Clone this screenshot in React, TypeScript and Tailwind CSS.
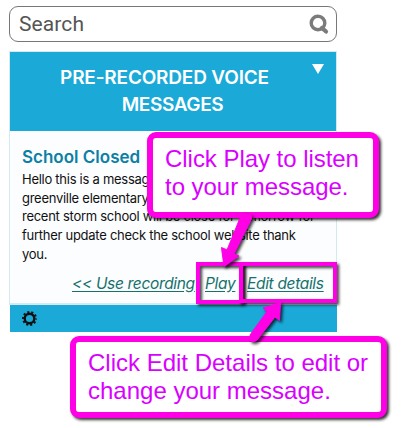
import React from "react";

const Arrows = () => (
  <svg className="absolute left-0 top-0 z-20 drop-shadow-[2px_2px_1.5px_rgba(0,0,0,0.75)]" width="406" height="428" viewBox="0 0 406 428" fill="#ff00e6" stroke="#ff00e6" strokeLinejoin="round">
    <path strokeWidth="1" d="M242 213 L251 215 L251.500 219 L234 254 L239 256 L224 266.500 L221.500 247.500 L227 250 Z" />
    <path strokeWidth="1" d="M280.500 302.500 L279.500 320.500 L275 317 L258 339 Q254 343.500 250 340.500 Q248 338 251 333.500 L267 311.500 L263 308 Z" />
  </svg>
);

export default function App() {
  return (
    <div className="relative h-[428px] w-[406px] overflow-hidden bg-white pl-[9px] pt-[6px] font-['Inter',sans-serif]">
      <div className="flex h-9 w-[328px] items-center justify-between rounded-[9px] border border-[#777] pl-[9px] pr-[7px] text-[#555]">
        <span className="font-['Roboto',sans-serif] text-[21px] leading-8 tracking-[0.1px]">Search</span>
        <svg width="20" height="21" viewBox="0 0 20 21" fill="none" stroke="#7b7b7b">
          <circle cx="9" cy="9" r="6.8" strokeWidth="3.4" />
          <path d="M13 14 L17 17.500" strokeWidth="4.200" strokeLinecap="round" />
        </svg>
      </div>

      <div className="mt-[9px] w-[328px]">
        <div className="border border-b-2 border-[#d3eaf1] bg-[#fbfdff]">
          <div className="relative h-[79px] bg-[#1ba9d8] pt-[12px] text-center text-[19px] font-semibold leading-[27px] text-white">
            <div className="whitespace-nowrap pr-[17px] tracking-[-0.18px]">PRE-RECORDED VOICE</div>
            <div className="pr-px tracking-[-0.4px]">MESSAGES</div>
            <svg className="absolute right-3 top-3" width="12" height="10" viewBox="0 0 12 10" fill="white"><path d="M0 0H12L6 10Z" /></svg>
          </div>
          <div className="h-[172px] pl-3 pt-[15px]">
            <h2 className="text-[17px] font-semibold leading-[22px] text-[#0c80a4]">School Closed</h2>
            <div className="whitespace-nowrap pt-[2px] text-[13px] leading-[18.7px] tracking-[-0.27px] text-[#111]">
              <div>Hello this is a message</div>
              <div>greenville elementary</div>
              <div>recent storm school will be close for tomorrow for</div>
              <div>further update check the school website thank</div>
              <div>you.</div>
            </div>
            <div className="flex whitespace-nowrap pl-[50px] pt-[10px] text-[15.5px] italic leading-[20px] tracking-[-0.33px] text-[#16706b] underline underline-offset-2">
              <span className="w-[133px]">&lt;&lt; Use recording</span>
              <span className="w-[42px]">Play</span>
              <span>Edit details</span>
            </div>
          </div>
        </div>
        <div className="ml-px flex h-[27px] items-center bg-[#1ba9d8] pl-3">
          <svg width="15" height="15" viewBox="0 0 15 15" fill="none" stroke="#111">
            <circle cx="7.500" cy="7.500" r="4.800" strokeWidth="2.4" />
            <circle cx="7.500" cy="7.500" r="6.500" strokeWidth="2" strokeDasharray="2.042 2.042" strokeDashoffset="1" />
          </svg>
        </div>
      </div>

      <div className="absolute left-[196px] top-[262px] h-[42px] w-[48px] border-4 border-[#ff00e6] drop-shadow-[2px_2px_1.5px_rgba(0,0,0,0.75)]" />
      <div className="absolute left-[239px] top-[262px] h-[41px] w-[98px] border-4 border-[#ff00e6] drop-shadow-[2px_2px_1.5px_rgba(0,0,0,0.75)]" />

      <div className="absolute left-[147px] top-[132px] z-10 h-[86px] w-[232px] whitespace-nowrap rounded-[9px] border-[6px] border-[#ff00e6] bg-white pl-3 pt-[7px] font-['Liberation_Sans',Arial,sans-serif] text-[24px] leading-[28px] tracking-[-0.04px] text-[#d900ff] shadow-[2px_2px_3px_rgba(0,0,0,0.8)]">
        <div>Click Play to listen</div>
        <div>to your message.</div>
      </div>
      <div className="absolute left-[70px] top-[336px] z-10 h-[82px] w-[317px] whitespace-nowrap rounded-[9px] border-[6px] border-[#ff00e6] bg-white pl-3 pt-[7px] font-['Liberation_Sans',Arial,sans-serif] text-[24px] leading-[28px] text-[#d900ff] shadow-[2px_2px_3px_rgba(0,0,0,0.8)]">
        <div>Click Edit Details to edit or</div>
        <div>change your message.</div>
      </div>
      <Arrows />
    </div>
  );
}
